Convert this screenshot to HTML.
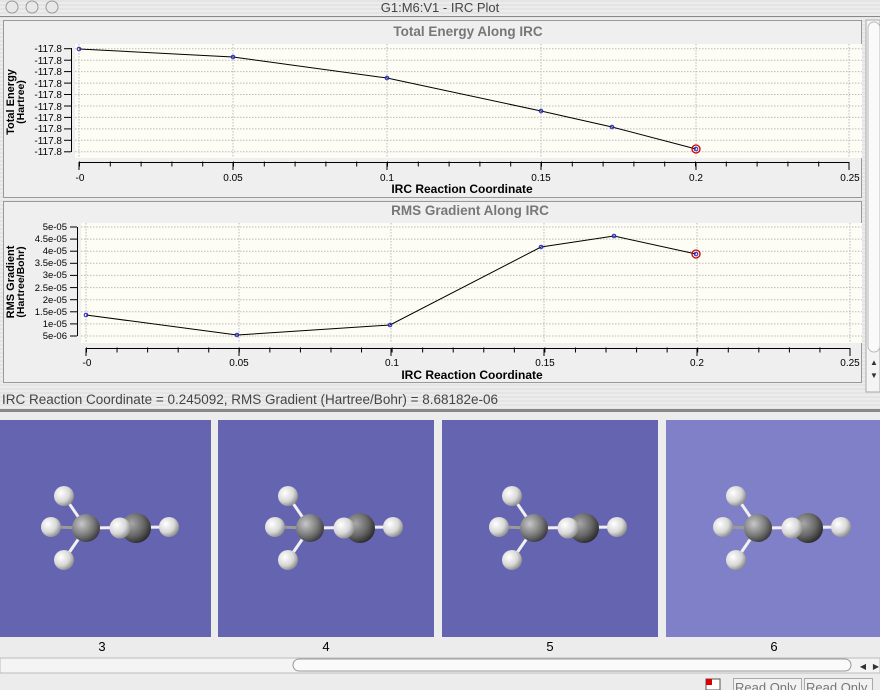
<!DOCTYPE html>
<html><head><meta charset="utf-8"><style>
html,body{margin:0;padding:0;width:880px;height:690px;overflow:hidden;background:#e8e8e8;}
svg{display:block}
text{font-family:"Liberation Sans",sans-serif}
</style></head><body>
<svg width="880" height="690" viewBox="0 0 880 690" xmlns="http://www.w3.org/2000/svg">
<defs>
<pattern id="stripe" width="4" height="4" patternUnits="userSpaceOnUse"><rect width="4" height="4" fill="#ececec"/><rect width="4" height="2" fill="#e4e4e4"/></pattern>
<radialGradient id="gH" cx="0.35" cy="0.35" r="0.7"><stop offset="0" stop-color="#ffffff"/><stop offset="0.6" stop-color="#d8d8d8"/><stop offset="1" stop-color="#8a8a8a"/></radialGradient>
<radialGradient id="gC" cx="0.35" cy="0.35" r="0.7"><stop offset="0" stop-color="#c8c8c8"/><stop offset="0.6" stop-color="#7a7a7a"/><stop offset="1" stop-color="#3a3a3a"/></radialGradient>
<radialGradient id="gC2" cx="0.35" cy="0.35" r="0.7"><stop offset="0" stop-color="#a8a8a8"/><stop offset="0.6" stop-color="#666"/><stop offset="1" stop-color="#2a2a2a"/></radialGradient>
<g id="mol">
<line x1="86" y1="528" x2="64" y2="496" stroke="#f0f0f0" stroke-width="3"/>
<line x1="86" y1="528" x2="64" y2="560" stroke="#f0f0f0" stroke-width="3"/>
<line x1="86" y1="528" x2="51" y2="527" stroke="#999" stroke-width="3"/>
<line x1="86" y1="528" x2="169" y2="527" stroke="#f0f0f0" stroke-width="3"/>
<circle cx="64" cy="496" r="10" fill="url(#gH)"/>
<circle cx="51" cy="527" r="10" fill="url(#gH)"/>
<circle cx="64" cy="560" r="10" fill="url(#gH)"/>
<circle cx="86" cy="528" r="14" fill="url(#gC)"/>
<circle cx="136" cy="528" r="15" fill="url(#gC2)"/>
<circle cx="120" cy="528" r="10.5" fill="url(#gH)"/>
<circle cx="169" cy="527" r="10" fill="url(#gH)"/>
</g>
</defs>
<!-- title bar -->
<rect x="0" y="0" width="880" height="17" fill="url(#stripe)"/>
<line x1="0" y1="16.5" x2="880" y2="16.5" stroke="#888"/>
<circle cx="12" cy="7" r="6" fill="#e8e8e8" stroke="#999"/>
<circle cx="32" cy="7" r="6" fill="#e8e8e8" stroke="#999"/>
<circle cx="52" cy="7" r="6" fill="#e8e8e8" stroke="#999"/>
<text x="440" y="12" font-size="13" fill="#444" text-anchor="middle">G1:M6:V1 - IRC Plot</text>
<!-- top area background -->
<rect x="0" y="17" width="880" height="393" fill="url(#stripe)"/>
<rect x="3.5" y="20.5" width="858" height="177" fill="#efefef" stroke="#999"/>
<rect x="3.5" y="201.5" width="858" height="181" fill="#efefef" stroke="#999"/>
<!-- panel 1 -->
<text x="468" y="36" font-size="13.5" font-weight="bold" fill="#777" text-anchor="middle">Total Energy Along IRC</text>
<rect x="75" y="44" width="787" height="114" fill="#fdfdf5"/>
<g stroke="#bbb" stroke-dasharray="1.5 1.5" stroke-width="1">
<line x1="75" y1="48.7" x2="862" y2="48.7"/><line x1="75" y1="60.2" x2="862" y2="60.2"/><line x1="75" y1="71.6" x2="862" y2="71.6"/><line x1="75" y1="83.1" x2="862" y2="83.1"/><line x1="75" y1="94.5" x2="862" y2="94.5"/><line x1="75" y1="106" x2="862" y2="106"/><line x1="75" y1="117.4" x2="862" y2="117.4"/><line x1="75" y1="128.9" x2="862" y2="128.9"/><line x1="75" y1="140.3" x2="862" y2="140.3"/><line x1="75" y1="151.8" x2="862" y2="151.8"/>
<line x1="79" y1="44" x2="79" y2="158"/><line x1="233" y1="44" x2="233" y2="158"/><line x1="387" y1="44" x2="387" y2="158"/><line x1="541" y1="44" x2="541" y2="158"/><line x1="696" y1="44" x2="696" y2="158"/><line x1="849" y1="44" x2="849" y2="158"/>
</g>
<g stroke="#000" stroke-width="1">
<line x1="71.5" y1="48" x2="71.5" y2="152"/>
<line x1="64" y1="48.7" x2="71" y2="48.7"/><line x1="64" y1="60.2" x2="71" y2="60.2"/><line x1="64" y1="71.6" x2="71" y2="71.6"/><line x1="64" y1="83.1" x2="71" y2="83.1"/><line x1="64" y1="94.5" x2="71" y2="94.5"/><line x1="64" y1="106" x2="71" y2="106"/><line x1="64" y1="117.4" x2="71" y2="117.4"/><line x1="64" y1="128.9" x2="71" y2="128.9"/><line x1="64" y1="140.3" x2="71" y2="140.3"/><line x1="64" y1="151.8" x2="71" y2="151.8"/>
<line x1="79" y1="162.5" x2="849" y2="162.5"/>
<line x1="79" y1="164" x2="849" y2="164" stroke-width="5" stroke-dasharray="1 29.8"/>
<line x1="79" y1="162" x2="79" y2="170"/><line x1="233" y1="162" x2="233" y2="170"/><line x1="387" y1="162" x2="387" y2="170"/><line x1="541" y1="162" x2="541" y2="170"/><line x1="696" y1="162" x2="696" y2="170"/><line x1="849" y1="162" x2="849" y2="170"/>
</g>
<g font-size="10" fill="#000" text-anchor="end">
<text x="62" y="52">-117.8</text><text x="62" y="64">-117.8</text><text x="62" y="75">-117.8</text><text x="62" y="87">-117.8</text><text x="62" y="98">-117.8</text><text x="62" y="110">-117.8</text><text x="62" y="121">-117.8</text><text x="62" y="132">-117.8</text><text x="62" y="144">-117.8</text><text x="62" y="155">-117.8</text>
</g>
<g font-size="10" fill="#000" text-anchor="middle">
<text x="80" y="181">-0</text><text x="233" y="181">0.05</text><text x="387" y="181">0.1</text><text x="541" y="181">0.15</text><text x="696" y="181">0.2</text><text x="850" y="181">0.25</text>
</g>
<text x="462" y="193" font-size="12" font-weight="bold" text-anchor="middle">IRC Reaction Coordinate</text>
<text transform="translate(14,102) rotate(-90)" font-size="11" font-weight="bold" text-anchor="middle">Total Energy</text>
<text transform="translate(24,102) rotate(-90)" font-size="10.5" font-weight="bold" text-anchor="middle">(Hartree)</text>
<polyline points="79,49 233,57 387,78 541,111 612,127 696,149" fill="none" stroke="#000" stroke-width="1"/>
<g fill="none" stroke="#22c" stroke-width="1"><circle cx="79" cy="49" r="1.8"/><circle cx="233" cy="57" r="1.8"/><circle cx="387" cy="78" r="1.8"/><circle cx="541" cy="111" r="1.8"/><circle cx="612" cy="127" r="1.8"/><circle cx="696" cy="149" r="1.8"/></g>
<circle cx="696" cy="149" r="4" fill="none" stroke="#c00" stroke-width="1.3"/>
<!-- panel 2 -->
<text x="470" y="215" font-size="13.5" font-weight="bold" fill="#777" text-anchor="middle">RMS Gradient Along IRC</text>
<rect x="81" y="223" width="781" height="120" fill="#fdfdf5"/>
<g stroke="#bbb" stroke-dasharray="1.5 1.5" stroke-width="1">
<line x1="81" y1="227" x2="862" y2="227"/><line x1="81" y1="239.1" x2="862" y2="239.1"/><line x1="81" y1="251.2" x2="862" y2="251.2"/><line x1="81" y1="263.3" x2="862" y2="263.3"/><line x1="81" y1="275.4" x2="862" y2="275.4"/><line x1="81" y1="287.6" x2="862" y2="287.6"/><line x1="81" y1="299.7" x2="862" y2="299.7"/><line x1="81" y1="311.8" x2="862" y2="311.8"/><line x1="81" y1="323.9" x2="862" y2="323.9"/><line x1="81" y1="336" x2="862" y2="336"/>
<line x1="86" y1="223" x2="86" y2="343"/><line x1="239" y1="223" x2="239" y2="343"/><line x1="391" y1="223" x2="391" y2="343"/><line x1="544" y1="223" x2="544" y2="343"/><line x1="697" y1="223" x2="697" y2="343"/><line x1="850" y1="223" x2="850" y2="343"/>
</g>
<g stroke="#000" stroke-width="1">
<line x1="77.5" y1="227" x2="77.5" y2="336"/>
<line x1="70" y1="227" x2="77" y2="227"/><line x1="70" y1="239.1" x2="77" y2="239.1"/><line x1="70" y1="251.2" x2="77" y2="251.2"/><line x1="70" y1="263.3" x2="77" y2="263.3"/><line x1="70" y1="275.4" x2="77" y2="275.4"/><line x1="70" y1="287.6" x2="77" y2="287.6"/><line x1="70" y1="299.7" x2="77" y2="299.7"/><line x1="70" y1="311.8" x2="77" y2="311.8"/><line x1="70" y1="323.9" x2="77" y2="323.9"/><line x1="70" y1="336" x2="77" y2="336"/>
<line x1="86" y1="348.5" x2="850" y2="348.5"/>
<line x1="86" y1="350" x2="850" y2="350" stroke-width="5" stroke-dasharray="1 29.56"/>
<line x1="86" y1="348" x2="86" y2="356"/><line x1="239" y1="348" x2="239" y2="356"/><line x1="391" y1="348" x2="391" y2="356"/><line x1="544" y1="348" x2="544" y2="356"/><line x1="697" y1="348" x2="697" y2="356"/><line x1="850" y1="348" x2="850" y2="356"/>
</g>
<g font-size="9.5" fill="#000" text-anchor="end">
<text x="67" y="230">5e-05</text><text x="67" y="242">4.5e-05</text><text x="67" y="254">4e-05</text><text x="67" y="266">3.5e-05</text><text x="67" y="278">3e-05</text><text x="67" y="291">2.5e-05</text><text x="67" y="303">2e-05</text><text x="67" y="315">1.5e-05</text><text x="67" y="327">1e-05</text><text x="67" y="339">5e-06</text>
</g>
<g font-size="10" fill="#000" text-anchor="middle">
<text x="87" y="366">-0</text><text x="239" y="366">0.05</text><text x="392" y="366">0.1</text><text x="545" y="366">0.15</text><text x="697" y="366">0.2</text><text x="850" y="366">0.25</text>
</g>
<text x="472" y="379" font-size="12" font-weight="bold" text-anchor="middle">IRC Reaction Coordinate</text>
<text transform="translate(14,282) rotate(-90)" font-size="11" font-weight="bold" text-anchor="middle">RMS Gradient</text>
<text transform="translate(24,282) rotate(-90)" font-size="10.5" font-weight="bold" text-anchor="middle">(Hartree/Bohr)</text>
<polyline points="86,315 237,335 390,325 541,247 614,236 696,254" fill="none" stroke="#000" stroke-width="1"/>
<g fill="none" stroke="#22c" stroke-width="1"><circle cx="86" cy="315" r="1.8"/><circle cx="237" cy="335" r="1.8"/><circle cx="390" cy="325" r="1.8"/><circle cx="541" cy="247" r="1.8"/><circle cx="614" cy="236" r="1.8"/><circle cx="696" cy="254" r="1.8"/></g>
<circle cx="696" cy="254" r="4" fill="none" stroke="#c00" stroke-width="1.3"/>
<!-- right scrollbar -->
<rect x="866" y="20" width="14" height="372" fill="#f4f4f4" stroke="#aaa"/>
<rect x="868" y="22" width="12" height="330" rx="6" fill="#fafafa" stroke="#bbb"/>
<text x="874" y="365" font-size="8" text-anchor="middle" fill="#333">▲</text>
<text x="874" y="378" font-size="8" text-anchor="middle" fill="#333">▼</text>
<!-- status -->
<text x="2" y="404" font-size="13.5" fill="#444">IRC Reaction Coordinate = 0.245092,  RMS Gradient (Hartree/Bohr) = 8.68182e-06</text>
<line x1="0" y1="409.5" x2="880" y2="409.5" stroke="#888"/>
<rect x="0" y="410" width="880" height="280" fill="#ececec"/>
<line x1="0" y1="411" x2="880" y2="411" stroke="#666" stroke-width="1.5"/>
<!-- molecule panels -->
<rect x="0" y="420" width="211" height="217" fill="#6464b0"/>
<rect x="218" y="420" width="216" height="217" fill="#6464b0"/>
<rect x="442" y="420" width="216" height="217" fill="#6464b0"/>
<rect x="666" y="420" width="214" height="217" fill="#8080c8"/>
<use href="#mol"/>
<use href="#mol" x="224"/>
<use href="#mol" x="448"/>
<use href="#mol" x="672"/>
<g font-size="13" fill="#000" text-anchor="middle">
<text x="102" y="651">3</text><text x="326" y="651">4</text><text x="550" y="651">5</text><text x="774" y="651">6</text>
</g>
<!-- bottom scrollbar -->
<rect x="0" y="658" width="880" height="15" fill="#f4f4f4" stroke="#bbb"/>
<rect x="293" y="659" width="558" height="12" rx="6" fill="#fafafa" stroke="#999"/>
<text x="863" y="669" font-size="8" fill="#333" text-anchor="middle">◀</text>
<text x="876" y="669" font-size="8" fill="#333" text-anchor="middle">▶</text>
<rect x="0" y="675" width="880" height="15" fill="#ececec"/>
<rect x="706" y="679" width="14" height="11" fill="#fff" stroke="#555"/>
<rect x="706" y="679" width="6" height="6" fill="#d00"/>
<rect x="733.5" y="678.5" width="68" height="12" fill="#f2f2f2" stroke="#aaa"/>
<rect x="804.5" y="678.5" width="68" height="12" fill="#f2f2f2" stroke="#aaa"/>
<text x="735" y="692" font-size="13" fill="#777">Read Only</text>
<text x="806" y="692" font-size="13" fill="#777">Read Only</text>
</svg>
</body></html>
